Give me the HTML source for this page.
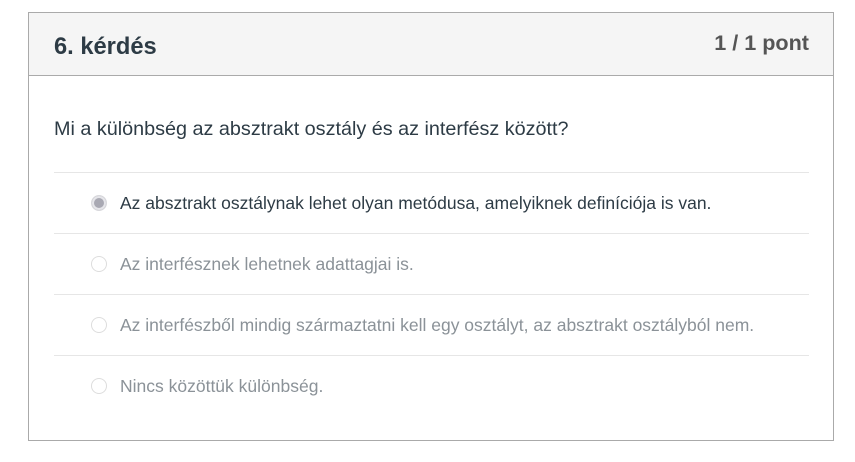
<!DOCTYPE html>
<html><head><meta charset="utf-8"><style>
body{margin:0;background:#fff;font-family:"Liberation Sans",Arial,sans-serif;}
.box{position:absolute;left:28px;top:12px;width:804px;height:427px;border:1px solid #aaa;}
.hdr{position:absolute;left:0;top:0;right:0;height:62px;background:#f5f5f5;border-bottom:1px solid #aaa;}
.t{position:absolute;left:25px;top:21px;font-size:23.7px;font-weight:bold;color:#2d3b45;}
.p{position:absolute;right:24px;top:17px;font-size:21.6px;font-weight:bold;color:#555;}
.q{position:absolute;left:25px;top:105px;font-size:19.8px;color:#2d3b45;}
.sep{position:absolute;left:25px;width:755px;height:1px;background:#e6e6e6;}
.o{position:absolute;left:91px;font-size:17.5px;color:#8b9298;}
.r{position:absolute;left:62px;width:14px;height:14px;border:1px solid #ddd;border-radius:50%;background:#fff;}
.r.c{background:#a9a9b3;box-shadow:0 0 0 2px #e6e6ea inset;border-color:#d8d8dc;}
</style></head><body>
<div class="box">
<div class="hdr"><div class="t">6. kérdés</div><div class="p">1 / 1 pont</div></div>
<div class="q">Mi a különbség az absztrakt osztály és az interfész között?</div>
<div class="sep" style="top:159px"></div>
<div class="r c" style="top:182px"></div><div class="o" style="top:180px;color:#2d3b45">Az absztrakt osztálynak lehet olyan metódusa, amelyiknek definíciója is van.</div>
<div class="sep" style="top:220px"></div>
<div class="r" style="top:243px"></div><div class="o" style="top:241px">Az interfésznek lehetnek adattagjai is.</div>
<div class="sep" style="top:281px"></div>
<div class="r" style="top:304px"></div><div class="o" style="top:302px">Az interfészből mindig származtatni kell egy osztályt, az absztrakt osztályból nem.</div>
<div class="sep" style="top:342px"></div>
<div class="r" style="top:365px"></div><div class="o" style="top:363px">Nincs közöttük különbség.</div>
</div>
</body></html>
